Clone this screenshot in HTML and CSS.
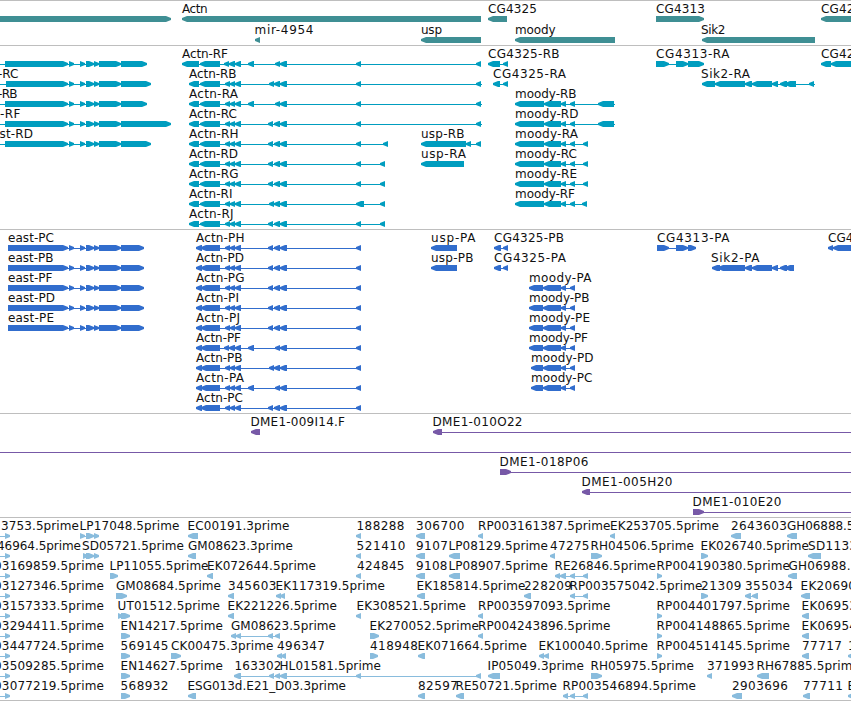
FILE: index.html
```html
<!DOCTYPE html>
<html lang="en">

<head>
	<meta charset="UTF-8">
	<title>Genome tracks</title>
	<link rel="stylesheet" href="styles.css">
</head>

<body>
<div class="browser">
	<div class="track gene" id="gene"></div>
	<div class="track transcript" id="transcript"></div>
	<div class="track protein" id="protein"></div>
	<div class="track bac" id="bac"></div>
	<div class="track est" id="est"></div>
</div>
<script src="tracks.js"></script>
</body>

</html>
```

FILE: styles.css
```css
* {
	padding: 0;
	margin: 0;
}

body {
	background: #fff;
	overflow: hidden;
}

.browser {
	width: 851px;
	height: 701px;
	overflow: hidden;
	box-sizing: border-box;
	border-bottom: 1px solid #bebebe;
}

.track {
	display: flex;
	flex-direction: column;
	box-sizing: border-box;
	padding-top: 3px;
	border-top: 1px solid #bebebe;
}

.row {
	display: block;
	flex: none;
	width: 851px;
	height: 20px;
	overflow: visible;
}

.row text {
	font-family: "DejaVu Sans", sans-serif;
	font-size: 12px;
	fill: #111;
}

.gene {
	gap: 1px;
	fill: #3f8f94;
}

.transcript {
	fill: #009dbf;
}

.protein {
	fill: #316dcd;
}

.bac {
	fill: #7759a7;
}

.est {
	height: 183px;
	fill: #89bcdd;
}
```

FILE: tracks.js
```js
// feature: [label, label start, label end, strand, exons, line end]
var eastR = '69-74 80-85 86-94 94-99 99-121 ';
var east = '8-68 ' + eastR + '121-144';
var actn = '189-199 200-220 225-230 230-235 235-241 ';
var actnP = '196-202 201-220 225-230 230-235 235-241 ';
var actnPC = actnP + '268-273 274-280 280-287 356-361';
var moody = '515-544 544-561 561-566 570-575 ';
var moodyP = '529-543 543-561 561-566 570-575';
var moodyP2 = '531-543 543-561 561-566 570-575';

var tracks = {
	gene: [
		[
			['', 0, 0, '>', '-9-171'],
			['Actn', 182, 207.5, '<', '182-481'],
			['CG4325', 488, 537, '<', '488-507'],
			['CG4313', 656, 705, '>', '656-704'],
			['CG42', 821, 854.5, '<', '821-860']
		],
		[
			['mir-4954', 254.5, 313.5, '<', '255-260'],
			['usp', 421, 442, '<', '421-481'],
			['moody', 515, 555.5, '<', '515-615'],
			['Sik2', 701, 725.5, '<', '702-815']
		]
	],
	transcript: [
		[
			['', 0, 0, '>', '-9--6 5-68 ' + eastR + '121-147'],
			['Actn-RF', 182, 228, '<', '182-199 200-220 224-229 229-235 235-241 248-254 275-280 280-287 356-361 476-481'],
			['CG4325-RB', 488, 559.5, '<', '488-500 503-508'],
			['CG4313-RA', 656, 729.5, '>', '656-669 676-688 688-704'],
			['CG42', 821, 854.5, '<', '821-831 831-860']
		],
		[
			['-RC', -2, 18.5, '>', '-9--6 6-68 ' + eastR + '121-151'],
			['Actn-RB', 189, 236.5, '<', actn + '269-274 274-280 280-287 356-361 476-481', 482],
			['CG4325-RA', 493, 566, '<', '493-500 503-508'],
			['Sik2-RA', 701, 750, '<', '702-715 715-745 745-752 752-772 772-778 780-787 785-796 809-814', 815]
		],
		[
			['-RB', -2, 17.5, '>', '-9--6 5-68 ' + eastR + '121-147'],
			['Actn-RA', 189, 238, '<', actn + '248-254 275-280 280-287 356-361 476-481', 482],
			['moody-RB', 515, 576.5, '<', moody + '598-614', 615]
		],
		[
			['-RF', 0, 20.5, '>', '-9--6 5-68 ' + eastR + '121-171'],
			['Actn-RC', 189, 237, '<', actn + '268-273 274-280 280-287 356-361 476-481', 482],
			['moody-RD', 515, 578.5, '<', moody + '598-614', 615]
		],
		[
			['st-RD', -0.5, 33, '>', '-9--6 5-68 ' + eastR + '121-151'],
			['Actn-RH', 189, 238.5, '<', actn + '268-273 274-280 280-287 356-361 383-388'],
			['usp-RB', 421, 464.5, '<', '421-466 466-471 476-481'],
			['moody-RA', 515, 578, '<', moody + '583-588']
		],
		[
			['Actn-RD', 189, 238, '<', actn + '268-273 274-280 280-287 356-361 380-385'],
			['usp-RA', 421, 466, '<', '421-464'],
			['moody-RC', 515, 577, '<', moody + '583-588']
		],
		[
			['Actn-RG', 189, 238.5, '<', actn + '268-273 274-280 280-287 356-361 380-385'],
			['moody-RE', 515, 577, '<', moody + '583-588']
		],
		[
			['Actn-RI', 189, 232.5, '<', actn + '269-274 274-280 280-287 356-364 380-385'],
			['moody-RF', 515, 575, '<', moody + '582-587']
		],
		[
			['Actn-RJ', 189, 233.5, '<', actn + '268-273 274-280 280-287 356-361 380-385']
		]
	],
	protein: [
		[
			['east-PC', 8, 54, '>', east],
			['Actn-PH', 196, 244.5, '<', actnPC],
			['usp-PA', 431, 475.5, '<', '431-457'],
			['CG4325-PB', 494, 564, '<', '494-501 503-508'],
			['CG4313-PA', 657, 729.5, '>', '657-669 676-688 688-696'],
			['CG4', 828, 853.5, '<', '828-833 833-860']
		],
		[
			['east-PB', 8, 53.5, '>', east],
			['Actn-PD', 196, 244, '<', actnPC],
			['usp-PB', 431, 473.5, '<', '431-457'],
			['CG4325-PA', 494, 566, '<', '494-501 503-508'],
			['Sik2-PA', 711, 759.5, '<', '712-720 718-745 745-752 752-772 772-778 780-787 785-794']
		],
		[
			['east-PF', 8, 52.5, '>', east],
			['Actn-PG', 196, 244.5, '<', actnPC],
			['moody-PA', 529, 591.5, '<', moodyP]
		],
		[
			['east-PD', 8, 55, '>', east],
			['Actn-PI', 196, 239, '<', actnPC],
			['moody-PB', 529, 589.5, '<', moodyP]
		],
		[
			['east-PE', 8, 54, '>', east],
			['Actn-PJ', 196, 240, '<', actnPC],
			['moody-PE', 529, 590, '<', moodyP]
		],
		[
			['Actn-PF', 196, 241, '<', '196-202 201-220 224-229 229-235 235-241 248-254 275-280 280-287 356-361'],
			['moody-PF', 529, 588, '<', moodyP]
		],
		[
			['Actn-PB', 196, 242.5, '<', actnP + '269-274 274-280 280-287 356-361'],
			['moody-PD', 531, 593.5, '<', moodyP2]
		],
		[
			['Actn-PA', 196, 244, '<', actnP + '248-254 275-280 280-287 356-361'],
			['moody-PC', 531, 592.5, '<', moodyP2]
		],
		[
			['Actn-PC', 196, 243, '<', actnPC]
		]
	],
	bac: [
		[
			['DME1-009I14.F', 250.5, 345, '<', '251-260'],
			['DME1-010O22', 432.5, 522.5, '<', '433-442', 851]
		],
		[
			['', 0, 0, '<', '-9--4', 851]
		],
		[
			['DME1-018P06', 499.5, 588.5, '>', '500-511', 851]
		],
		[
			['DME1-005H20', 581.5, 672.5, '<', '582-590', 851]
		],
		[
			['DME1-010E20', 692.5, 781.5, '>', '693-704', 851]
		]
	],
	est: [
		[
			['3753.5prime', 1, 79, '>', '-9--4 5-10'],
			['LP17048.5prime', 79.5, 179.5, '>', '80-85 86-94 94-99'],
			['EC00191.3prime', 187.5, 289.5, '<', '188-198'],
			['188288', 356.5, 404.5, '<', '356-361'],
			['306700', 416, 464.5, '<', '416-425'],
			['RP003161387.5prime', 478, 610.5, '<', '478-483'],
			['EK253705.5prime', 610, 719, '<', '610-615'],
			['2643603', 731, 787, '<', '731-741'],
			['GH06888.5', 787, 854.5, '<', '787-797']
		],
		[
			['46964.5prime', -3, 81, '>', '-9--4 5-10'],
			['SD05721.5prime', 82, 184, '>', '83-88 86-94 94-99'],
			['GM08623.3prime', 188, 293, '<', '188-196'],
			['521410', 356.5, 405.5, '<', '356-361'],
			['9107', 416, 448, '<', '416-425'],
			['LP08129.5prime', 448.5, 548, '<', '449-460'],
			['47275', 550, 589.5, '<', '550-555'],
			['RH04506.5prime', 590.5, 694, '>', '591-602'],
			['EK026740.5prime', 700.5, 809, '>', '701-708'],
			['SD1133', 808, 857, '<', '808-821']
		],
		[
			['03169859.5prime', -6, 104, '>', '-9--4 5-10'],
			['LP11055.5prime', 109.5, 208.5, '>', '110-118'],
			['EK072644.5prime', 207, 316, '<', '207-213'],
			['424845', 357, 404.5, '<', '356-361'],
			['9108', 416, 447.5, '<', '416-425'],
			['LP08907.5prime', 448.5, 548, '<', '449-460'],
			['RE26846.5prime', 554.5, 656, '<', '555-560 560-566 570-575 583-588'],
			['RP004190380.5prime', 656.5, 790, '>', '657-662'],
			['GH06988.', 788.5, 850.5, '<', '788-797']
		],
		[
			['03127346.5prime', -6, 104, '>', '-9--4 5-10'],
			['GM08684.5prime', 116, 221, '>', '116-127'],
			['345603', 228, 276.5, '<', '228-234'],
			['EK117319.5prime', 275.5, 385, '<', '276-281 280-285'],
			['EK185814.5prime', 416.5, 525.5, '<', '417-425'],
			['228209', 524, 572, '<', '524-531'],
			['RP003575042.5prime', 569.5, 702.5, '<', '570-575 583-588'],
			['21309', 701, 741.5, '>', '701-708'],
			['355034', 745, 793, '<', '745-751 752-758'],
			['EK20690', 800.5, 856, '<', '801-810']
		],
		[
			['03157333.5prime', -6, 104, '>', '-9--4 5-10'],
			['UT01512.5prime', 117.5, 220, '>', '118-123 121-130'],
			['EK221226.5prime', 227.5, 337, '<', '228-234'],
			['EK308521.5prime', 356.5, 466, '<', '356-361'],
			['RP003597093.5prime', 478, 610.5, '<', '478-483'],
			['RP004401797.5prime', 656.5, 790, '>', '657-662'],
			['EK06953', 801.5, 857, '<', '802-809']
		],
		[
			['03294411.5prime', -6, 104, '>', '-9--4 5-10'],
			['EN14217.5prime', 120.5, 223, '>', '121-130'],
			['GM08623.5prime', 231, 336, '<', '231-236 236-241 268-273 275-280'],
			['EK270052.5prime', 369.5, 479, '>', '370-379'],
			['RP004243896.5prime', 478, 610.5, '<', '478-483'],
			['RP004148865.5prime', 656.5, 790, '>', '657-662'],
			['EK06954', 801.5, 857, '<', '802-809']
		],
		[
			['03447724.5prime', -6, 104, '>', '-9--4 5-10'],
			['569145', 120.5, 168.5, '>', '121-130'],
			['CK00475.3prime', 171, 273.5, '>', '171-181'],
			['496347', 277, 325, '<', '277-282 281-286'],
			['418948', 370, 418, '>', '370-378'],
			['EK071664.5prime', 417.5, 527, '<', '418-425'],
			['EK100040.5prime', 538.5, 648, '<', '539-544 544-549'],
			['RP004514145.5prime', 656.5, 790, '>', '657-662'],
			['77717', 802, 842, '<', '802-809'],
			['1', 848, 856, '<', '848-855']
		],
		[
			['03509285.5prime', -6, 104, '>', '-9--4 5-10'],
			['EN14627.5prime', 120.5, 223, '>', '121-130'],
			['163302', 234.5, 281.5, '<', '234-241 269-274 275-280'],
			['HL01581.5prime', 279.5, 381, '<', '280-287 356-361 476-481'],
			['IP05049.3prime', 487.5, 584, '<', '488-500'],
			['RH05975.5prime', 590.5, 694, '>', '591-602'],
			['371993', 707, 754.5, '<', '707-712'],
			['RH67885.5prime', 756.5, 860, '<', '757-769']
		],
		[
			['03077219.5prime', -6, 104, '>', '-9--4 5-10'],
			['568932', 120.5, 168.5, '>', '121-130'],
			['ESG013d.E21_D03.3prime', 187.5, 346, '<', '188-196'],
			['82597', 418, 458, '<', '418-425'],
			['RE50721.5prime', 455.5, 557, '<', '456-464'],
			['RP003546894.5prime', 562.5, 696, '<', '563-568 570-575 583-588'],
			['2903696', 732, 788, '<', '732-742'],
			['77711', 803, 843, '<', '803-810'],
			['E', 847.5, 855, '<', '848-855']
		]
	]
};

// one exon, with the arrow head inside its own width
function exon(a, b, strand) {
	var h = Math.min(b - a, 5);
	var pts;
	if (strand == '<') {
		pts = [[b, 12], [b, 18], [a + h, 18], [a, 16], [a, 14], [a + h, 12]];
	} else {
		pts = [[a, 12], [a, 18], [b - h, 18], [b, 16], [b, 14], [b - h, 12]];
	}
	return '<polygon points="' + pts.join(' ') + '"/>';
}

function feature(f) {
	var exons = f[4].split(' ').map(function (e) {
		var m = e.match(/^(-?\d+)-(-?\d+)$/);
		return [+m[1], +m[2]];
	});
	var start = exons[0][0];
	var end = f[5] || exons[exons.length - 1][1];
	var out = '<rect x="' + start + '" y="15" width="' + (end - start) + '" height="1"/>';
	exons.forEach(function (e) {
		out += exon(e[0], e[1], f[3]);
	});
	if (f[0]) {
		out += '<text x="' + f[1] + '" y="9" textLength="' + (f[2] - f[1]) + '">' + f[0] + '</text>';
	}
	return out;
}

Object.keys(tracks).forEach(function (id) {
	document.getElementById(id).innerHTML = tracks[id].map(function (row) {
		return '<svg class="row">' + row.map(feature).join('') + '</svg>';
	}).join('');
});
```
